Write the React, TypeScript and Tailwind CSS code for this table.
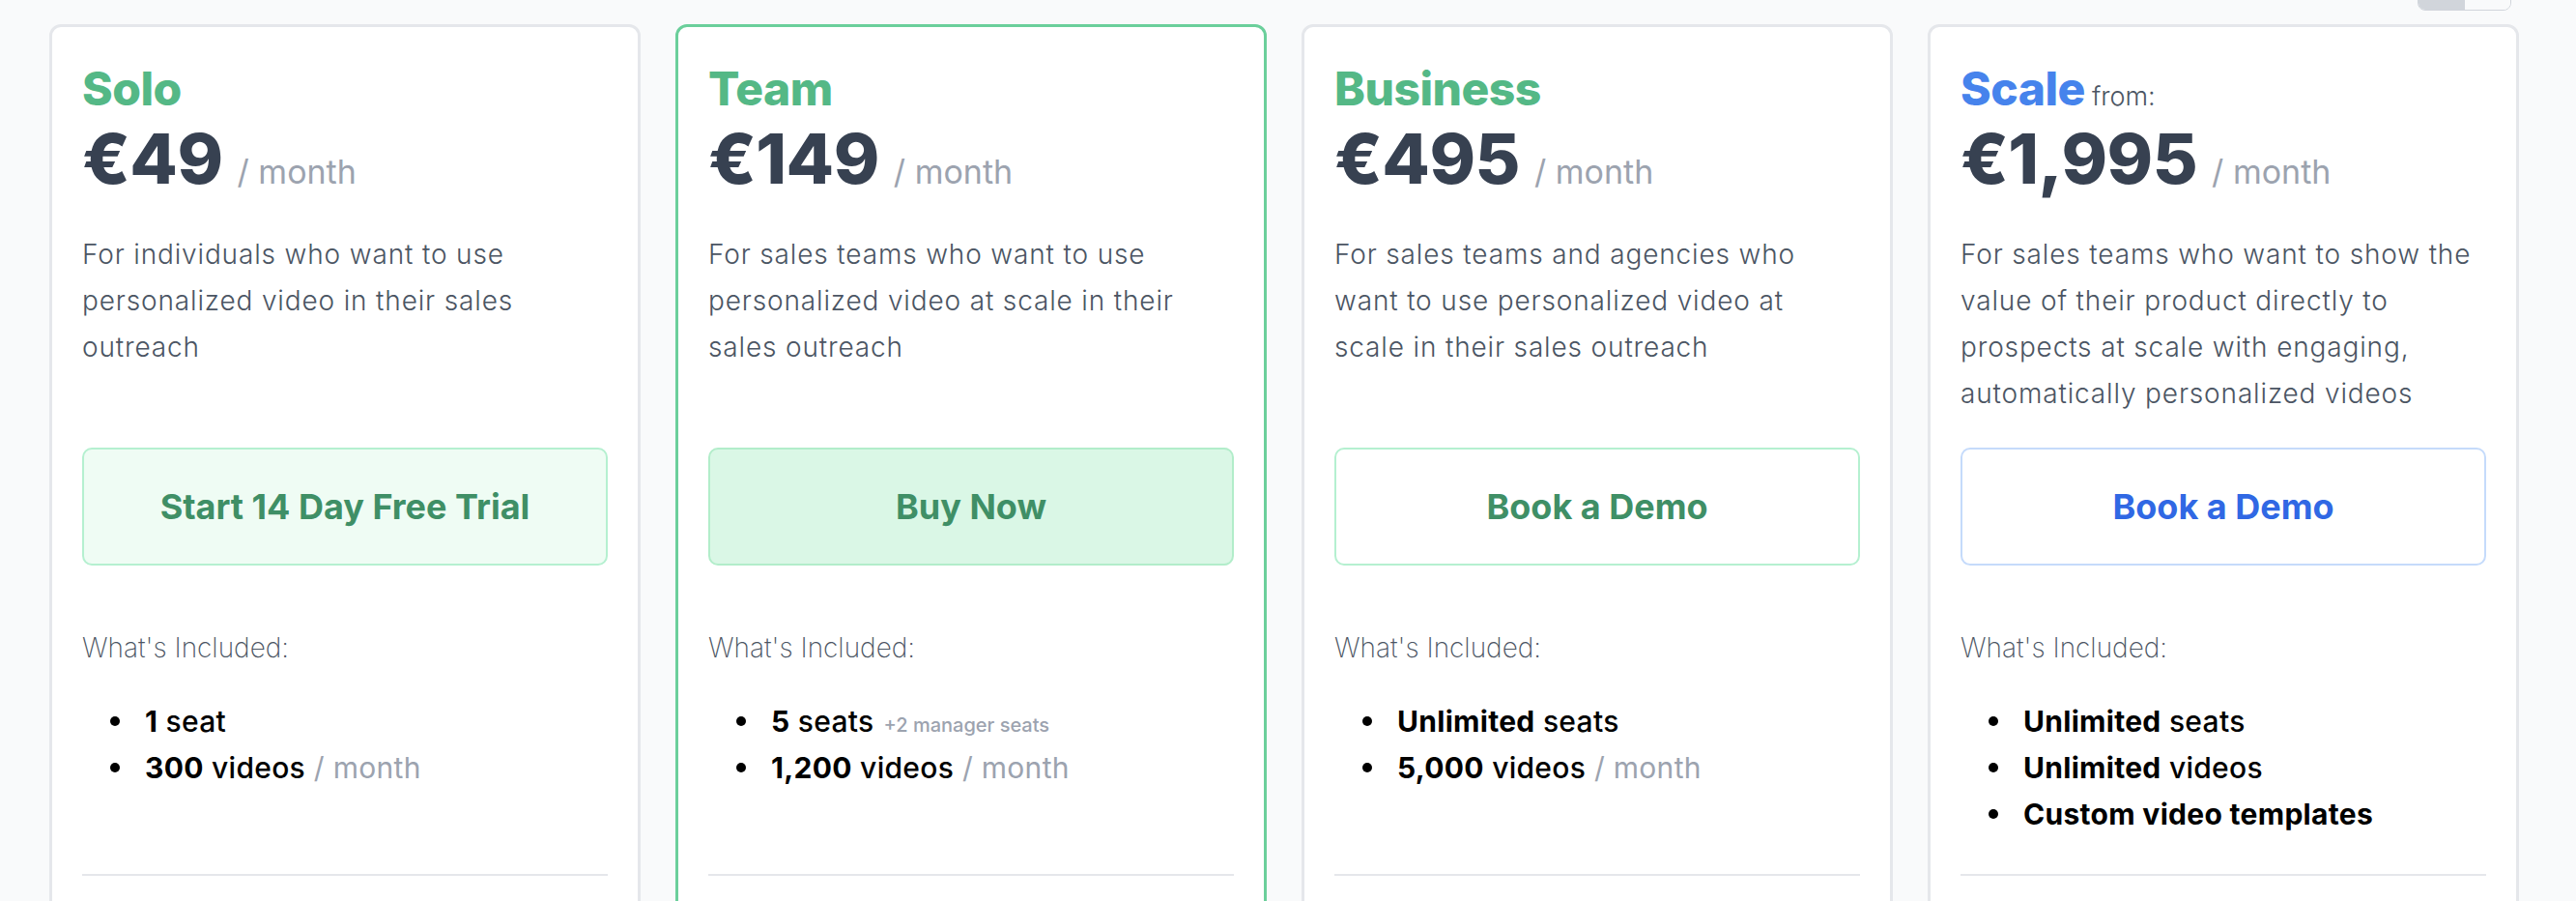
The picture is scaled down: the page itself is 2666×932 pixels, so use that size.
import React from 'react';

type Feature = {
  bold: string;
  rest?: string;
  muted?: string;
  small?: string;
};

type Plan = {
  name: string;
  from?: boolean;
  price: string;
  description: string;
  cta: string;
  variant: 'trial' | 'buy' | 'demo' | 'demoBlue';
  featured?: boolean;
  features: Feature[];
};

const plans: Plan[] = [
  {
    name: 'Solo',
    price: '€49',
    description: 'For individuals who want to use personalized video in their sales outreach',
    cta: 'Start 14 Day Free Trial',
    variant: 'trial',
    features: [
      { bold: '1', rest: ' seat' },
      { bold: '300', rest: ' videos', muted: ' / month' },
    ],
  },
  {
    name: 'Team',
    price: '€149',
    description: 'For sales teams who want to use personalized video at scale in their sales outreach',
    cta: 'Buy Now',
    variant: 'buy',
    featured: true,
    features: [
      { bold: '5', rest: ' seats', small: '+2 manager seats' },
      { bold: '1,200', rest: ' videos', muted: ' / month' },
    ],
  },
  {
    name: 'Business',
    price: '€495',
    description: 'For sales teams and agencies who want to use personalized video at scale in their sales outreach',
    cta: 'Book a Demo',
    variant: 'demo',
    features: [
      { bold: 'Unlimited', rest: ' seats' },
      { bold: '5,000', rest: ' videos', muted: ' / month' },
    ],
  },
  {
    name: 'Scale',
    from: true,
    price: '€1,995',
    description:
      'For sales teams who want to show the value of their product directly to prospects at scale with engaging, automatically personalized videos',
    cta: 'Book a Demo',
    variant: 'demoBlue',
    features: [
      { bold: 'Unlimited', rest: ' seats' },
      { bold: 'Unlimited', rest: ' videos' },
      { bold: 'Custom video templates' },
    ],
  },
];

const buttonStyles: Record<Plan['variant'], string> = {
  trial: 'bg-[#effcf4] border-[#b5f0d0] text-[#3f8f66]',
  buy: 'bg-[#daf7e6] border-[#b2edca] text-[#3f8f66]',
  demo: 'bg-white border-[#b5f0d0] text-[#3f8f66]',
  demoBlue: 'bg-white border-[#c5dbfb] text-[#3068e4]',
};

function PlanCard({ plan }: { plan: Plan }) {
  return (
    <div
      className={`flex flex-col rounded-[12px] border-[3px] bg-white px-[31px] pt-[40px] pb-[40px] ${
        plan.featured ? 'border-[#6bcf9b]' : 'border-[#e5e7eb]'
      }`}
    >
      {/* name */}
      <div className="flex h-[48px] items-baseline leading-[48px]">
        <h2
          className={`text-[48px] leading-[48px] font-extrabold tracking-[-0.5px] ${
            plan.from ? 'text-[#4683ec]' : 'text-[#54b886]'
          }`}
        >
          {plan.name}
        </h2>
        {plan.from && (
          <span className="ml-[7px] text-[27px] leading-[48px] font-light text-[#4b5563]">from:</span>
        )}
      </div>

      {/* price */}
      <div className="mt-[12px] flex items-baseline">
        <span className="text-[72px] leading-[72px] font-extrabold tracking-[-0.5px] text-[#374151]">
          {plan.price}
        </span>
        <span className="ml-[15px] text-[34px] text-[#9ca3af]">/ month</span>
      </div>

      {/* description */}
      <p className="mt-[36px] min-h-[192px] pr-[4px] text-[28px] leading-[48px] font-light tracking-[0.85px] text-[#4b5563]">
        {plan.description}
      </p>

      {/* cta */}
      <button
        className={`mt-[32px] flex h-[122px] w-full items-center justify-center rounded-[10px] border-2 text-[36px] font-bold ${
          buttonStyles[plan.variant]
        }`}
      >
        {plan.cta}
      </button>

      <p className="mt-[61px] text-[28px] leading-[48px] font-extralight text-[#4b5563]">What's Included:</p>

      <ul className="mt-[28px] min-h-[144px] text-[30px] leading-[48px] tracking-[0.3px] text-black">
        {plan.features.map((f, i) => (
          <li key={i} className="flex h-[48px] items-center pl-[29px]">
            <span className="h-[10px] w-[10px] shrink-0 rounded-full bg-black" />
            <span className="ml-[26px]">
              <span className="font-bold">{f.bold}</span>
              {f.rest && <span className="font-medium">{f.rest}</span>}
              {f.small && (
                <span className="ml-[10px] text-[20px] leading-none font-medium tracking-normal text-[#9ca3af]">
                  {f.small}
                </span>
              )}
              {f.muted && <span className="font-normal text-[#9ca3af]">{f.muted}</span>}
            </span>
          </li>
        ))}
      </ul>

      <div className="mt-[38px] h-[2px] w-full bg-[#e5e7eb]" />

      <div className="h-[60px]" />
    </div>
  );
}

export default function App() {
  return (
    <div className="min-h-screen overflow-hidden bg-[#f9fafb] font-['Inter','Noto_Sans',sans-serif]">
      <div className="flex flex-col pl-[51px] pr-[59px]">
        {/* billing toggle, scrolled mostly out of view */}
        <div className="flex justify-end pr-[8px]">
          <div className="-mt-[33px] flex h-[44px] w-[97px] overflow-hidden rounded-[8px] border border-[#d1d5db]">
            <div className="flex-1 bg-[#d1d5db]" />
            <div className="flex-1 bg-[#f9fafb]" />
          </div>
        </div>

        <div className="mt-[14px] grid grid-cols-4 gap-[36px]">
          {plans.map((p) => (
            <PlanCard key={p.name} plan={p} />
          ))}
        </div>
      </div>
    </div>
  );
}
